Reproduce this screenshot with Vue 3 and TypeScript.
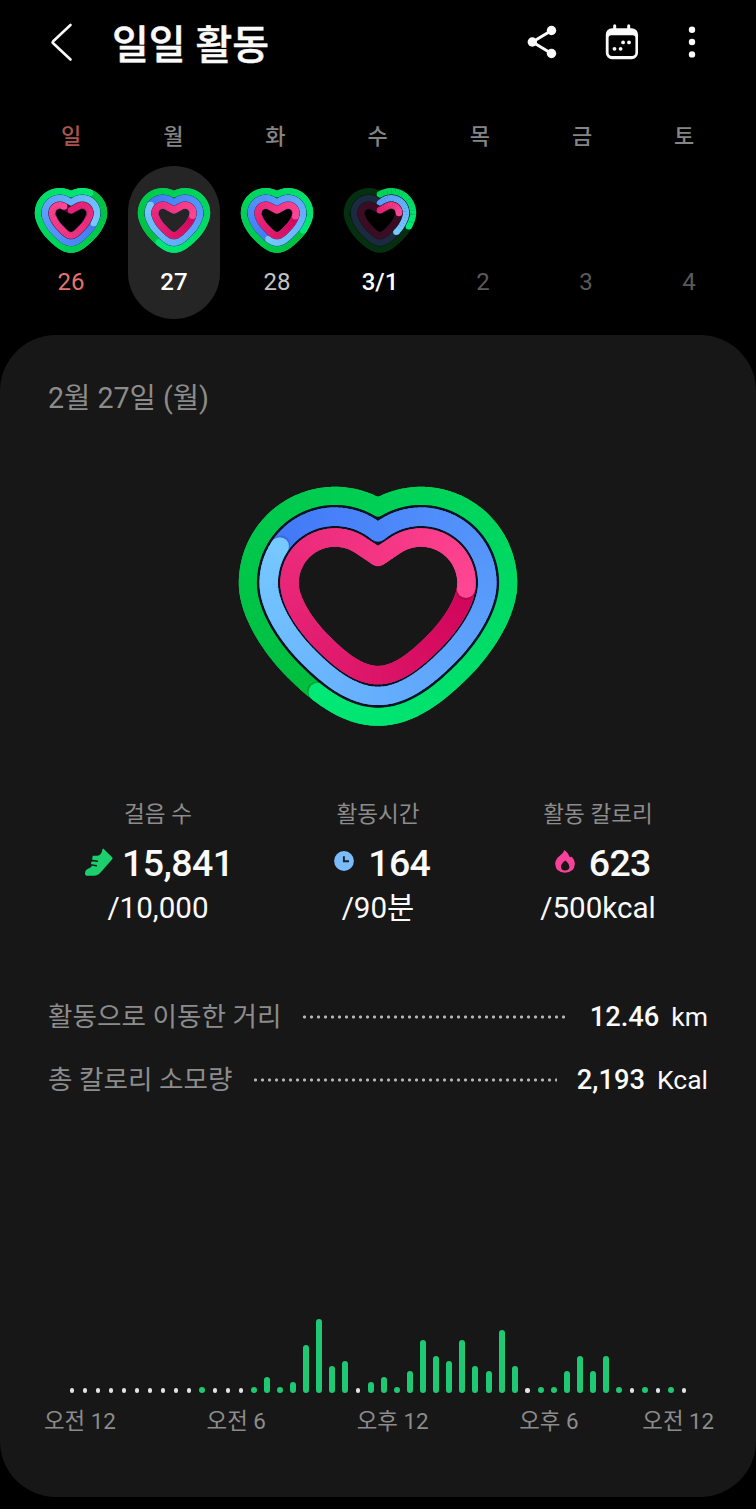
<script setup lang="ts">
type Point = [number, number]
type Rgb = [number, number, number]

interface Shape {
  stroke: number
  radii: number[]
  dip: number
  drop: number
}
interface RingColors {
  tail: Rgb
  head: Rgb
  track: string
}
interface RingValue {
  progress: number
  full: boolean
}
interface Piece {
  points: string
  color: string
}
interface DrawnRing {
  track: string
  trackColor: string
  pieces: Piece[]
  start: Point
  startColor: string
  end: Point
  shade: Point
  endColor: string
  full: boolean
}

const LOBE_X = 43
const LOBE_Y = 108

const large: Shape = { stroke: 18.4, radii: [87, 66.3, 45.5], dip: 82, drop: 154.6 }
const small: Shape = { stroke: 25.4, radii: [83.5, 56.5, 30], dip: 97, drop: 164.5 }

const colors: RingColors[] = [
  { tail: [0, 190, 62], head: [0, 232, 118], track: '#04300f' },
  { tail: [66, 120, 248], head: [118, 200, 255], track: '#1c2a40' },
  { tail: [208, 4, 90], head: [255, 70, 146], track: '#3d0c24' },
]

function bezier(p0: Point, p1: Point, p2: Point, p3: Point, steps: number): Point[] {
  const out: Point[] = []
  for (let i = 1; i <= steps; i++) {
    const t = i / steps
    const u = 1 - t
    const k = [u * u * u, 3 * u * u * t, 3 * u * t * t, t * t * t]
    out.push([
      k[0] * p0[0] + k[1] * p1[0] + k[2] * p2[0] + k[3] * p3[0],
      k[0] * p0[1] + k[1] * p1[1] + k[2] * p2[1] + k[3] * p3[1],
    ])
  }
  return out
}

function ringPoints(shape: Shape, r: number): Point[] {
  const half: Point[] = []
  let from = -Math.acos(-LOBE_X / r)
  if (r < 50) {
    half.push([0, shape.dip])
    const rise = LOBE_Y - shape.dip
    from = -(Math.PI - Math.atan2(rise, LOBE_X)) + Math.acos(r / Math.hypot(LOBE_X, rise))
  }
  for (let i = 0; i <= 60; i++) {
    const a = from * (1 - i / 60)
    half.push([LOBE_X + r * Math.cos(a), LOBE_Y + r * Math.sin(a)])
  }
  const k = (r - 36.3) / 60
  const sag = (shape.drop - large.drop) * 0.5
  const side = LOBE_X + r
  const bottom = shape.drop + r
  const mid: Point = [49.5 + 41 * k, 160.7 + 41.3 * k + sag]
  const up = (22 + 13 * k) * 0.707
  const low = (20 + 18 * k) * 0.707
  half.push(
    ...bezier([side, LOBE_Y], [side, LOBE_Y + 16 + 16 * k], [mid[0] + up, mid[1] - up], mid, 40),
    ...bezier(mid, [mid[0] - low, mid[1] + low], [18 + 16 * k, bottom], [0, bottom], 40),
  )
  const mirrored = half.slice(0, -1).reverse().map(([x, y]): Point => [-x, y])
  return [...half, ...mirrored].map(([x, y]): Point => [x + 150, y])
}

function measure(points: Point[]): number[] {
  const out = [0]
  for (let i = 1; i < points.length; i++) {
    out.push(out[i - 1] + Math.hypot(points[i][0] - points[i - 1][0], points[i][1] - points[i - 1][1]))
  }
  return out
}

function at(points: Point[], len: number[], t: number): Point {
  const total = len[len.length - 1]
  const s = Math.max(0, Math.min(1, t)) * total
  let i = 1
  while (i < len.length - 1 && len[i] < s) i++
  const k = (s - len[i - 1]) / (len[i] - len[i - 1] || 1)
  return [
    points[i - 1][0] + (points[i][0] - points[i - 1][0]) * k,
    points[i - 1][1] + (points[i][1] - points[i - 1][1]) * k,
  ]
}

const fmt = (list: Point[]) => list.map(([x, y]) => `${x.toFixed(2)},${y.toFixed(2)}`).join(' ')

function mix(a: Rgb, b: Rgb, k: number): string {
  return `rgb(${a.map((v, i) => Math.round(v + (b[i] - v) * k)).join(',')})`
}

function drawRing(shape: Shape, index: number, value: RingValue, steps: number): DrawnRing {
  const { tail, head, track } = colors[index]
  const pts = ringPoints(shape, shape.radii[index])
  const len = measure(pts)
  const total = len[len.length - 1]
  const colorAt = (t: number) => {
    if (!value.full) return mix(tail, head, 0.45 + (0.55 * t) / value.progress)
    const k = t <= value.progress ? 1 - (value.progress - t) : t - value.progress
    return mix(tail, head, k)
  }
  const limit = value.full ? 1 : value.progress
  const marks = [value.progress]
  for (let i = 0; i <= steps; i++) {
    const c = i / steps
    if (c <= limit && Math.abs(c - value.progress) > 0.0005) marks.push(c)
  }
  marks.sort((a, b) => a - b)
  const pieces: Piece[] = []
  for (let i = 0; i < marks.length - 1; i++) {
    const a = marks[i]
    const b = marks[i + 1]
    const stop = b === value.progress ? b : Math.min(1, b + 0.8 / total)
    const inner = pts.filter((_, j) => len[j] / total > a && len[j] / total < stop)
    pieces.push({
      points: fmt([at(pts, len, a), ...inner, at(pts, len, stop)]),
      color: colorAt((a + b) / 2),
    })
  }
  return {
    track: fmt(pts),
    trackColor: value.full ? colorAt(0) : track,
    pieces,
    start: pts[0],
    startColor: colorAt(0),
    end: at(pts, len, value.progress),
    shade: at(pts, len, value.progress + 2.2 / total),
    endColor: mix(tail, head, 1),
    full: value.full,
  }
}

function heart(shape: Shape, values: RingValue[], steps: number): DrawnRing[] {
  return values.map((v, i) => drawRing(shape, i, v, steps))
}

const lap = (progress: number): RingValue => ({ progress, full: true })
const part = (progress: number): RingValue => ({ progress, full: false })

const monday = [lap(0.587), lap(0.824), lap(0.246)]
const mainHeart = heart(large, monday, 140)

const weekdays = ['일', '월', '화', '수', '목', '금', '토']
const days = [
  { label: '26', kind: 'sunday', rings: heart(small, [lap(0.1), lap(0.3), part(0.93)], 50) },
  { label: '27', kind: 'selected', rings: heart(small, monday, 50) },
  { label: '28', kind: 'past', rings: heart(small, [lap(0.33), lap(0.56), lap(0.25)], 50) },
  { label: '3/1', kind: 'today', rings: heart(small, [part(0.305), part(0.37), part(0.22)], 50) },
  { label: '2', kind: 'future', rings: null },
  { label: '3', kind: 'future', rings: null },
  { label: '4', kind: 'future', rings: null },
]

const stats = [
  { icon: 'shoe', label: '걸음 수', value: '15,841', goal: '/10,000' },
  { icon: 'clock', label: '활동시간', value: '164', goal: '/90분' },
  { icon: 'flame', label: '활동 칼로리', value: '623', goal: '/500kcal' },
]

const totals = [
  { label: '활동으로 이동한 거리', value: '12.46', unit: 'km' },
  { label: '총 칼로리 소모량', value: '2,193', unit: 'Kcal' },
]

const bars: number[] = [
  0, 0, 0, 0, 0, 0, 0, 0, 0, 0, 6, 0, 0, 0, 6, 16, 6, 10.7, 47.3, 73.5, 26.5, 31.7, 0, 10.7,
  16, 6, 21.3, 52.5, 37, 31.7, 52.5, 26.5, 21.3, 63, 26.5, 0, 6, 6, 21.3, 37, 21.3, 37, 6, 0, 6, 0, 6, 0,
]
const hours = ['오전 12', '오전 6', '오후 12', '오후 6', '오전 12']
</script>

<template>
  <main class="screen">
    <header class="bar">
      <svg class="back" viewBox="0 0 24 40"><path d="M20.5 3 3.2 19.3Q2.2 20.3 3.2 21.3L20.5 37.5" /></svg>
      <h1>일일 활동</h1>
      <svg class="share" viewBox="0 0 30 34">
        <path d="M24.5 5.5 5.5 17l19 11.5" />
        <circle cx="24.5" cy="5.5" r="4.7" /><circle cx="5.3" cy="17" r="4.7" /><circle cx="24.5" cy="28.5" r="4.7" />
      </svg>
      <svg class="calendar" viewBox="0 0 34 36">
        <path fill-rule="evenodd" d="M8.2 1.8a1.5 1.5 0 0 1 3 0V4.2h11V1.8a1.5 1.5 0 0 1 3 0V4.2h1.5a6.3 6.3 0 0 1 6.3 6.3v18.4a6.3 6.3 0 0 1-6.3 6.3h-19.6a6.3 6.3 0 0 1-6.3-6.3V10.5a6.3 6.3 0 0 1 6.3-6.3h1.1ZM6.2 11.3a2.6 2.6 0 0 0-2.6 2.6v14.7a3.4 3.4 0 0 0 3.4 3.4h20a3.4 3.4 0 0 0 3.4-3.4V13.9a2.6 2.6 0 0 0-2.6-2.6Z" />
        <circle cx="18.1" cy="18.4" r="1.9" /><circle cx="24" cy="18.4" r="1.9" />
        <circle cx="9.5" cy="24.8" r="1.9" /><circle cx="15.6" cy="24.8" r="1.9" />
      </svg>
      <svg class="more" viewBox="0 0 8 34"><circle cx="4" cy="4.7" r="3.2" /><circle cx="4" cy="17" r="3.2" /><circle cx="4" cy="29.4" r="3.2" /></svg>
    </header>

    <div class="weekdays">
      <span v-for="(w, i) in weekdays" :key="w" :class="{ red: i === 0 }">{{ w }}</span>
    </div>

    <div class="days">
      <div v-for="d in days" :key="d.label" class="day" :class="d.kind">
        <div class="mini">
          <svg v-if="d.rings" viewBox="0 0 300 270">
            <g v-for="(r, i) in d.rings" :key="i">
              <polygon v-if="i > 0" :points="r.track" class="gap" :class="{ dim: d.kind === 'today', rose: i === 2 }" />
              <polygon :points="r.track" class="ring" :stroke="r.trackColor" />
              <circle v-if="!r.full" :cx="r.start[0]" :cy="r.start[1]" r="12.7" :fill="r.startColor" />
              <polyline v-for="(p, k) in r.pieces" :key="k" :points="p.points" class="ring" :stroke="p.color" />
              <circle :cx="r.end[0]" :cy="r.end[1]" r="12.7" :fill="r.endColor" />
            </g>
          </svg>
        </div>
        <span class="date">{{ d.label }}</span>
      </div>
    </div>

    <section class="card">
      <h2>2월 27일 (월)</h2>

      <svg class="heart" viewBox="0 0 300 260">
        <g v-for="(r, i) in mainHeart" :key="i">
          <polygon v-if="i === 1" :points="r.track" class="gap" />
          <polygon :points="r.track" class="ring" :stroke="r.trackColor" />
          <polyline v-for="(p, k) in r.pieces" :key="k" :points="p.points" class="ring" :stroke="p.color" />
          <circle :cx="r.shade[0]" :cy="r.shade[1]" r="9.1" class="shade" />
          <circle :cx="r.end[0]" :cy="r.end[1]" r="9.2" :fill="r.endColor" />
        </g>
      </svg>

      <div class="stats">
        <div v-for="s in stats" :key="s.icon" class="stat" :class="s.icon">
          <span class="stat-label">{{ s.label }}</span>
          <div class="stat-value">
            <svg v-if="s.icon === 'shoe'" viewBox="0 0 28 28">
              <path class="green" d="M18.2.6 27.2 9.2Q28 10.2 27.2 11.2L16 24Q12.8 27.8 9 27.8H2.6Q0 27.8 0 25.2 .2 21.8 3.6 20.6 6.3 19.5 7.2 17.4L5.8 16.4 6.6 13.4 8.4 13.2 7 11.6 7.8 7.8H12.2Q16.6 7.4 17.4 1.2Z" />
              <path class="lace" d="M6 12.2 12.4 13.2M5.2 16.6 11.4 17.8" />
            </svg>
            <svg v-else-if="s.icon === 'clock'" viewBox="0 0 20 20">
              <circle class="blue" cx="10" cy="10" r="9.9" />
              <path class="hands" d="M9.9 5.2V10.3H15" />
            </svg>
            <svg v-else viewBox="0 0 20 23">
              <path class="pink" fill-rule="evenodd" d="M9.5 0Q13.5 3 14.6 6.8 15.6 7.8 16.2 6.6 19.8 9.6 19.8 14 19.4 22.4 10 22.8 .6 22.4.2 14 .2 9 4.8 5.8 8.2 3.6 9.5 0ZM10.2 10.4Q5.6 14 5.9 17.2 6.6 20.4 10 20.5 13.6 20.4 14.4 17.2 14.4 13.6 10.2 10.4Z" />
            </svg>
            <strong>{{ s.value }}</strong>
          </div>
          <span class="goal">{{ s.goal }}</span>
        </div>
      </div>

      <dl class="totals">
        <div v-for="t in totals" :key="t.label" class="total">
          <dt>{{ t.label }}</dt>
          <i class="dots"></i>
          <dd><b>{{ t.value }}</b><span>{{ t.unit }}</span></dd>
        </div>
      </dl>

      <div class="chart">
        <span v-for="(b, i) in bars" :key="i" class="slot">
          <i v-if="b" class="fill" :style="{ height: b + 'px' }"></i>
          <i v-else class="empty"></i>
        </span>
      </div>
      <div class="hours">
        <span v-for="(h, i) in hours" :key="i">{{ h }}</span>
      </div>
    </section>
  </main>
</template>

<style>
html,
body {
  background: #000;
}
</style>

<style scoped>
* {
  box-sizing: border-box;
}
.screen {
  width: 756px;
  height: 1509px;
  overflow: hidden;
  background: #000;
  color: #fafafa;
  font-family: Roboto, 'Noto Sans CJK KR', sans-serif;
}
.bar {
  display: flex;
  align-items: center;
  height: 83px;
  padding: 0 60px 0 50px;
}
.bar svg {
  flex: none;
  fill: #fafafa;
}
.back {
  width: 24px;
  height: 40px;
}
.bar .back {
  fill: none;
  stroke: #fafafa;
  stroke-width: 2.6;
  stroke-linecap: round;
}
h1 {
  flex: 1;
  margin: 8px 0 0 38px;
  font-size: 40px;
  line-height: 60px;
  font-weight: 500;
  -webkit-text-stroke: 0.5px #fafafa;
}
.share {
  width: 30px;
  height: 34px;
  margin-right: 48px;
}
.calendar {
  width: 34px;
  height: 36px;
  margin-right: 49px;
}
.share path {
  fill: none;
  stroke: #fafafa;
  stroke-width: 3;
}
.more {
  width: 8px;
  height: 34px;
}
.weekdays {
  display: grid;
  grid-template-columns: repeat(7, 102.2px);
  padding: 38px 0 0 20px;
  height: 83px;
  font-size: 22px;
  line-height: 32px;
  font-weight: 500;
  text-align: center;
  color: #858585;
}
.red {
  color: #a9544f;
}
.days {
  display: grid;
  grid-template-columns: repeat(7, 103px);
  height: 169px;
  padding-left: 19.5px;
}
.day {
  justify-self: center;
  width: 92.5px;
  height: 153px;
  padding-top: 19px;
  border-radius: 46px;
  text-align: center;
}
.mini {
  height: 80px;
}
.mini svg {
  display: block;
  width: 78px;
  height: 70.2px;
  margin: 0 auto;
}
.date {
  display: block;
  font-size: 24px;
  line-height: 34px;
}
.sunday .date {
  color: #e5736c;
}
.selected {
  background: #252525;
}
.selected .date,
.today .date {
  font-weight: 500;
  color: #fff;
}
.past .date {
  color: #c4c4c4;
}
.future .date {
  color: #5a5a5a;
}
.ring,
.gap {
  fill: none;
  stroke-width: 18.4;
  stroke-linejoin: round;
}
.gap {
  stroke: #081222;
  stroke-width: 23.6;
}
.mini .ring {
  stroke-width: 25.4;
}
.mini .gap {
  stroke: #10607a;
  stroke-width: 29.4;
}
.mini .gap.rose {
  stroke: #38306e;
}
.mini .gap.dim {
  stroke: #0b1c1c;
}
.shade {
  fill: #000;
  opacity: 0.13;
}
.card {
  height: 1162px;
  border-radius: 56px;
  background: #171717;
  overflow: hidden;
}
h2 {
  margin: 43px 0 0 48px;
  font-size: 28.6px;
  line-height: 40px;
  font-weight: 400;
  color: #8c8c8c;
}
.heart {
  display: block;
  width: 300px;
  height: 260px;
  margin: 57px auto 0;
}
.stats {
  display: grid;
  grid-template-columns: 220px 220px 220px;
  margin: 64px 0 0 48px;
}
.stat {
  display: flex;
  flex-direction: column;
  align-items: center;
}
.stat-label {
  font-size: 22.6px;
  line-height: 32px;
  color: #8c8c8c;
}
.stat-value {
  display: flex;
  align-items: center;
  height: 50px;
  margin-top: 7px;
}
.stat-value strong {
  font-size: 37.5px;
  line-height: 50px;
  font-weight: 500;
  letter-spacing: -0.6px;
}
.shoe svg {
  width: 28px;
  height: 28px;
  margin: -3px 9.5px 0 2px;
}
.clock svg {
  width: 20px;
  height: 20px;
  margin: -4px 14.5px 0 8px;
}
.flame svg {
  width: 20px;
  height: 23px;
  margin: -3px 14px 0 9.5px;
}
.green {
  fill: #1ccf6c;
}
.lace {
  fill: none;
  stroke: #171717;
  stroke-width: 1.4;
  stroke-linecap: round;
}
.blue {
  fill: #7abcfa;
}
.hands {
  fill: none;
  stroke: #17202c;
  stroke-width: 1.9;
}
.pink {
  fill: #f9409b;
}
.goal {
  font-size: 29.6px;
  line-height: 40px;
}
.totals {
  margin: 57px 48px 0;
}
.total {
  display: flex;
  align-items: center;
  height: 63px;
}
dt {
  font-size: 26.6px;
  line-height: 40px;
  color: #8c8c8c;
}
.dots {
  flex: 1;
  height: 4px;
  margin: 0 20px 0 20px;
  background: radial-gradient(circle at 3.5px 2px, #b4b4b4 1.1px, transparent 2px) 0 0 / 7px 4px repeat-x;
}
.total:first-child .dots {
  margin-right: 23px;
}
dd {
  display: flex;
  margin: 0;
  font-size: 26.5px;
  line-height: 40px;
}
dd b {
  margin-right: 12px;
  font-size: 27.3px;
  font-weight: 500;
}
.chart {
  display: flex;
  align-items: flex-end;
  width: 624.7px;
  height: 100px;
  margin: 181.5px 0 0 65.5px;
}
.slot {
  display: flex;
  flex: 1;
  justify-content: center;
}
.fill {
  width: 6px;
  border-radius: 3px;
  background: #1fc872;
}
.empty {
  width: 4.2px;
  height: 4.2px;
  border-radius: 50%;
  background: #e4e4e4;
}
.hours {
  display: flex;
  gap: 90.7px;
  padding: 12.5px 0 0 44px;
  font-size: 22.4px;
  line-height: 32px;
  color: #8c8c8c;
  white-space: nowrap;
}
.hours span:last-child {
  margin-left: -27px;
}
</style>
